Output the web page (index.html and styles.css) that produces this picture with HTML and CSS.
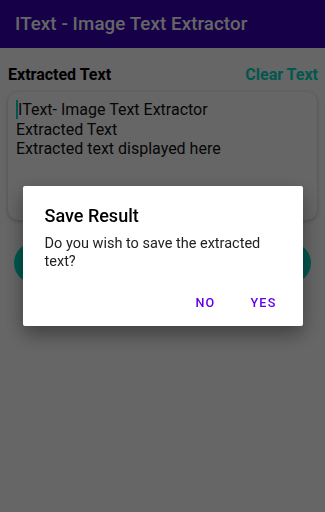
FILE: index.html
```html
<!DOCTYPE html>
<html lang="en">
<head>
  <meta charset="UTF-8" />
  <meta name="viewport" content="width=device-width, initial-scale=1.0"/>
  <title>IText - Image Text Extractor</title>
  <link rel="stylesheet" href="styles.css">
</head>
<body>

  <!-- App bar -->
  <header class="appbar">
    <h1>IText - Image Text Extractor</h1>
  </header>

  <!-- Main content -->
  <main class="content">
    <div class="heading-row">
      <span class="heading">Extracted Text</span>
      <a class="clear-link" href="#">Clear Text</a>
    </div>

    <div class="result-card">
      <p><span class="cursor"></span>IText- Image Text Extractor</p>
      <p>Extracted Text</p>
      <p>Extracted text displayed here</p>
    </div>

    <!-- label hidden behind the dialog in this state -->
    <button class="btn-save" aria-label="Save Text"></button>
  </main>

  <!-- Dialog -->
  <div class="scrim">
    <div class="dialog">
      <h2>Save Result</h2>
      <p>Do you wish to save the extracted text?</p>
      <div class="dialog-actions">
        <button>No</button>
        <button>Yes</button>
      </div>
    </div>
  </div>

</body>
</html>
```

FILE: styles.css
```css
body {
  margin: 0;
  font-family: Roboto, "Liberation Sans", sans-serif;
  background-color: #fff;
  color: #000;
}
.appbar {
  height: 48px;
  background-color: #3700b3;
  display: flex;
  align-items: center;
  padding-left: 15px;
}
.appbar h1 {
  margin: 0;
  color: white;
  font-size: 18.7px;
  font-weight: 500;
  letter-spacing: 0.1px;
}
.content {
  padding: 0 8px;
}
.heading-row {
  display: flex;
  justify-content: space-between;
  align-items: center;
  margin-top: 16px;
  height: 20px;
}
.heading {
  font-size: 16px;
  font-weight: bold;
}
.clear-link {
  color: #03dac5;
  text-decoration: none;
  font-size: 16px;
  font-weight: bold;
  margin-right: -1px;
}
.result-card {
  margin-top: 8px;
  height: 128px;
  box-sizing: border-box;
  padding: 8px 8px;
  border-radius: 10px;
  background-color: #fff;
  box-shadow: 0 1px 4px rgba(0,0,0,0.25);
}
.result-card p {
  margin: 0;
  font-size: 16px;
  line-height: 19.5px;
  color: #111;
}
.cursor {
  display: inline-block;
  width: 2px;
  height: 19px;
  background-color: #03dac5;
  vertical-align: -4px;
}
.btn-save {
  display: block;
  width: calc(100% - 12px);
  margin: 23px 6px 0;
  height: 40px;
  border: none;
  border-radius: 20px;
  background-color: #03dac5;
}
.scrim {
  position: fixed;
  inset: 0;
  background-color: rgba(0,0,0,0.6);
  display: flex;
  align-items: center;
  justify-content: center;
}
.dialog {
  width: 280px;
  box-sizing: border-box;
  padding: 18px 10px 8px 22px;
  background-color: #fff;
  border-radius: 2px;
  box-shadow: 0 8px 20px rgba(0,0,0,0.4);
}
.dialog h2 {
  margin: 0;
  font-size: 18px;
  font-weight: 500;
  line-height: 24px;
}
.dialog p {
  margin: 7px 12px 0 0;
  font-size: 14.5px;
  line-height: 18px;
  color: #222;
}
.dialog-actions {
  display: flex;
  justify-content: flex-end;
  margin-top: 15px;
}
.dialog-actions button {
  min-width: 58px;
  height: 32px;
  padding: 0 7px;
  border: none;
  background: none;
  color: #6200ee;
  font-family: inherit;
  font-size: 12.6px;
  font-weight: 500;
  letter-spacing: 1.2px;
  text-transform: uppercase;
}
```
